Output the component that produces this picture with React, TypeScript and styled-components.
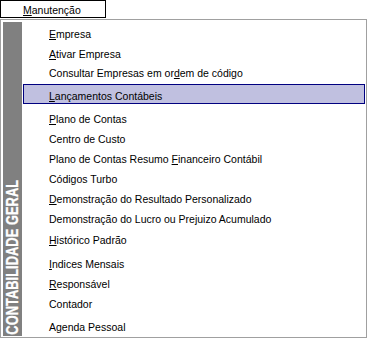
import React from 'react';
import styled, { createGlobalStyle } from 'styled-components';

const Global = createGlobalStyle`
  html, body { margin: 0; padding: 0; background: #fff; }
  body { font-family: "Liberation Sans", Arial, sans-serif; }
`;

const Screen = styled.div`
  width: 368px;
  height: 340px;
  background: #fff;
  display: flex;
  flex-direction: column;
`;

const MenuBar = styled.div`
  height: 19px;
  display: flex;
  align-items: flex-start;
`;

const BarItem = styled.div`
  width: 106px;
  height: 18px;
  box-sizing: border-box;
  border: 1px solid #000;
  padding: 2px 0 0 22px;
  font-size: 10.5px;
  line-height: 14px;
  color: #000;
  white-space: nowrap;
`;

const Dropdown = styled.div`
  width: 367px;
  height: 319px;
  box-sizing: border-box;
  border: 1px solid #a0a0a0;
  padding: 2px 1px 1px 2px;
  display: flex;
  gap: 1px;
  background: #fff;
`;

const Sidebar = styled.div`
  width: 19px;
  flex: none;
  background: #808080;
  display: flex;
  flex-direction: column;
  justify-content: flex-end;
  align-items: center;
  overflow: hidden;
`;

const SideLabel = styled.div`
  writing-mode: vertical-rl;
  transform: rotate(180deg);
  font-size: 17px;
  font-weight: bold;
  line-height: 19px;
  color: #fff;
  white-space: nowrap;
  margin-bottom: 1px;
`;

const SideText = styled.span`
  display: inline-block;
  transform: scaleY(0.76);
  transform-origin: top center;
  -webkit-text-stroke: 0.3px #fff;
`;

const Items = styled.div`
  flex: 1;
  display: flex;
  flex-direction: column;
`;

const Item = styled.div<{ $space: number; $active?: boolean }>`
  height: 20px;
  margin-top: ${p => p.$space}px;
  box-sizing: border-box;
  padding: 3px 0 0 25px;
  display: flex;
  align-items: center;
  font-size: 10.5px;
  color: #000;
  white-space: nowrap;
  border: 1px solid ${p => (p.$active ? '#000080' : 'transparent')};
  background: ${p => (p.$active ? '#c0c0e0' : 'transparent')};
`;

const Key = styled.span`
  text-decoration: underline;
`;

type Entry = { pre: string; key?: string; post?: string; space: number; active?: boolean };

const entries: Entry[] = [
  { pre: '', key: 'E', post: 'mpresa', space: 0 },
  { pre: '', key: 'A', post: 'tivar Empresa', space: 0 },
  { pre: 'Consultar Empresas em or', key: 'd', post: 'em de código', space: -1 },
  { pre: '', key: 'L', post: 'ançamentos Contábeis', space: 3, active: true },
  { pre: '', key: 'P', post: 'lano de Contas', space: 3 },
  { pre: 'Centro de Custo', space: 0 },
  { pre: 'Plano de Contas Resumo ', key: 'F', post: 'inanceiro Contábil', space: 0 },
  { pre: 'Códigos Turbo', space: 0 },
  { pre: '', key: 'D', post: 'emonstração do Resultado Personalizado', space: 0 },
  { pre: 'Demonstração do Lucro ou Prejuizo Acumulado', space: 0 },
  { pre: '', key: 'H', post: 'istórico Padrão', space: 1 },
  { pre: '', key: 'I', post: 'ndices Mensais', space: 4 },
  { pre: '', key: 'R', post: 'esponsável', space: 0 },
  { pre: 'Contador', space: 0 },
  { pre: 'Agenda Pessoal', space: 3 },
];

export default function App() {
  return (
    <Screen>
      <Global />
      <MenuBar>
        <BarItem>
          <Key>M</Key>anutenção
        </BarItem>
      </MenuBar>
      <Dropdown>
        <Sidebar>
          <SideLabel>
            <SideText>CONTABILIDADE GERAL</SideText>
          </SideLabel>
        </Sidebar>
        <Items>
          {entries.map((e, i) => (
            <Item key={i} $space={e.space} $active={e.active}>
              <span>
                {e.pre}
                {e.key && <Key>{e.key}</Key>}
                {e.post}
              </span>
            </Item>
          ))}
        </Items>
      </Dropdown>
    </Screen>
  );
}
